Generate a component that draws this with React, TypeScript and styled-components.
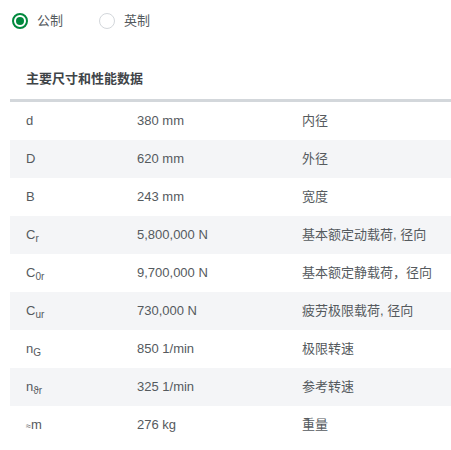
import React, { useState } from "react";
import styled, { createGlobalStyle } from "styled-components";

const Global = createGlobalStyle`
  body {
    margin: 0;
    background: #ffffff;
    font-family: "Liberation Sans", Arial, "Noto Sans CJK SC", sans-serif;
  }
`;

const Page = styled.div`
  padding: 13px 0 0 10px;
  color: #555a5e;
`;

const RadioGroup = styled.div`
  display: flex;
  align-items: center;
  gap: 36px;
  padding-left: 2px;
  height: 16px;
`;

const RadioItem = styled.label`
  display: flex;
  align-items: center;
  gap: 9px;
  font-size: 13px;
  line-height: 16px;
  color: #555a5e;
  cursor: pointer;
`;

const RadioCircle = styled.span<{ $checked: boolean }>`
  width: 16px;
  height: 16px;
  box-sizing: border-box;
  border-radius: 50%;
  border: ${(p) => (p.$checked ? "2px solid #00893d" : "1.5px solid #d3d7db")};
  display: flex;
  align-items: center;
  justify-content: center;
  &::after {
    content: "";
    width: 8px;
    height: 8px;
    border-radius: 50%;
    background: #00893d;
    display: ${(p) => (p.$checked ? "block" : "none")};
  }
`;

const Heading = styled.div`
  font-size: 13px;
  font-weight: bold;
  color: #3f4448;
  padding: 42px 0 0 16px;
  line-height: 16px;
`;

const Table = styled.div`
  margin-top: 12px;
  border-top: 3px solid #d3d7db;
`;

const Row = styled.div<{ $shaded: boolean }>`
  display: grid;
  grid-template-columns: 111px 165px 1fr;
  height: 38px;
  align-items: center;
  padding-left: 16px;
  font-size: 13px;
  line-height: 16px;
  background: ${(p) => (p.$shaded ? "#f4f5f7" : "#ffffff")};
`;

const Cell = styled.span`
  color: #555a5e;
  white-space: nowrap;
`;

const Sub = styled.sub`
  font-size: 10px;
  line-height: 0;
  vertical-align: -3px;
`;

const Approx = styled.span`
  font-size: 9px;
`;

type Item = { sym: React.ReactNode; val: string; desc: string };

const items: Item[] = [
  { sym: "d", val: "380 mm", desc: "内径" },
  { sym: "D", val: "620 mm", desc: "外径" },
  { sym: "B", val: "243 mm", desc: "宽度" },
  { sym: <>C<Sub>r</Sub></>, val: "5,800,000 N", desc: "基本额定动载荷, 径向" },
  { sym: <>C<Sub>0r</Sub></>, val: "9,700,000 N", desc: "基本额定静载荷，径向" },
  { sym: <>C<Sub>ur</Sub></>, val: "730,000 N", desc: "疲劳极限载荷, 径向" },
  { sym: <>n<Sub>G</Sub></>, val: "850 1/min", desc: "极限转速" },
  { sym: <>n<Sub>ϑr</Sub></>, val: "325 1/min", desc: "参考转速" },
  { sym: <><Approx>≈</Approx>m</>, val: "276 kg", desc: "重量" },
];

export default function App() {
  const [metric, setMetric] = useState(true);
  return (
    <>
      <Global />
      <Page>
        <RadioGroup>
          <RadioItem onClick={() => setMetric(true)}>
            <RadioCircle $checked={metric} />
            公制
          </RadioItem>
          <RadioItem onClick={() => setMetric(false)}>
            <RadioCircle $checked={!metric} />
            英制
          </RadioItem>
        </RadioGroup>
        <Heading>主要尺寸和性能数据</Heading>
        <Table>
          {items.map((it, i) => (
            <Row key={i} $shaded={i % 2 === 1}>
              <Cell>{it.sym}</Cell>
              <Cell>{it.val}</Cell>
              <Cell>{it.desc}</Cell>
            </Row>
          ))}
        </Table>
      </Page>
    </>
  );
}
